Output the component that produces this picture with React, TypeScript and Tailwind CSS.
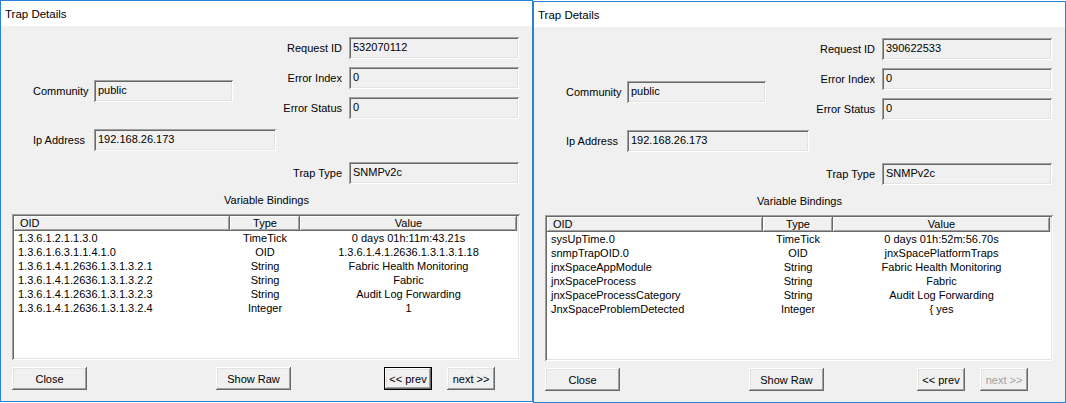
import React from "react";

const sunken =
  "shadow-[inset_1px_1px_0_#a0a0a0,inset_-1px_-1px_0_#ffffff,inset_2px_2px_0_#696969,inset_-2px_-2px_0_#e3e3e3]";
const raised =
  "shadow-[inset_-1px_-1px_0_#696969,inset_1px_1px_0_#ffffff,inset_-2px_-2px_0_#a0a0a0,inset_2px_2px_0_#e3e3e3]";

type Row = [string, string, string];

function Field({ value, w }: { value: string; w: string }) {
  return (
    <div className={`h-[22px] ${w} bg-[#f0f0f0] ${sunken} pl-[4px] pt-[3px] text-[11px] leading-[14px] text-black whitespace-nowrap overflow-hidden`}>
      {value}
    </div>
  );
}

function RightRow({ label, value }: { label: string; value: string }) {
  return (
    <div className="flex items-center">
      <div className="w-[61px] text-right text-[11px] leading-[14px] whitespace-nowrap">{label}</div>
      <div className="ml-[7px]">
        <Field value={value} w="w-[170px]" />
      </div>
    </div>
  );
}

function Btn({ label, w, variant }: { label: string; w: string; variant?: "default" | "disabled" }) {
  if (variant === "default") {
    return (
      <div className={`h-[23px] ${w} border border-black bg-[#f0f0f0] flex items-center justify-center text-[11px] leading-[14px]`}>
        <div className={`w-full h-full flex items-center justify-center ${raised}`}>{label}</div>
      </div>
    );
  }
  return (
    <div
      className={`h-[23px] ${w} bg-[#f0f0f0] ${raised} flex items-center justify-center text-[11px] leading-[14px] ${
        variant === "disabled" ? "text-[#a0a0a0]" : "text-black"
      }`}
    >
      {label}
    </div>
  );
}

function Dialog({
  requestId,
  rows,
  prevDefault,
  nextDisabled,
  shifted,
}: {
  requestId: string;
  rows: Row[];
  prevDefault?: boolean;
  nextDisabled?: boolean;
  shifted?: boolean;
}) {
  return (
    <div
      className={`w-[533px] h-[402px] border border-[#2a82d5] bg-[#f0f0f0] flex flex-col shrink-0 ${
        shifted ? "mt-px" : ""
      }`}
      style={{ fontFamily: '"Liberation Sans", Arial, sans-serif' }}
    >
      <div className="h-[25px] bg-white flex items-center pl-[4px] text-[11.5px] leading-[14px] text-black">
        Trap Details
      </div>
      <div className="flex-1 flex flex-col text-black">
        <div className="flex">
          <div className="w-[280px] pl-[32px] pt-[54px] flex flex-col gap-[27px]">
            <div className="flex items-center">
              <div className="w-[61px] text-[11px] leading-[14px]">Community</div>
              <Field value="public" w="w-[139px]" />
            </div>
            <div className="flex items-center">
              <div className="w-[61px] text-[11px] leading-[14px]">Ip Address</div>
              <Field value="192.168.26.173" w="w-[182px]" />
            </div>
          </div>
          <div className="pt-[11px] flex flex-col">
            <div className="flex flex-col gap-[8px]">
              <RightRow label="Request ID" value={requestId} />
              <RightRow label="Error Index" value="0" />
              <RightRow label="Error Status" value="0" />
            </div>
            <div className="mt-[43px]">
              <RightRow label="Trap Type" value="SNMPv2c" />
            </div>
          </div>
        </div>
        <div className="mt-[9px] text-center text-[11px] leading-[14px]">Variable Bindings</div>
        <div className={`mt-[7px] ml-[11px] w-[508px] h-[146px] bg-white ${sunken} p-[2px]`}>
          <div className="flex h-[15px] bg-[#f0f0f0] text-[11px] leading-[14px]">
            <div className="w-[216px] pl-[6px] shadow-[inset_-1px_-1px_0_#696969,inset_1px_1px_0_#ffffff,inset_-2px_-2px_0_#a0a0a0]">
              OID
            </div>
            <div className="w-[70px] text-center shadow-[inset_-1px_-1px_0_#696969,inset_1px_1px_0_#ffffff,inset_-2px_-2px_0_#a0a0a0]">
              Type
            </div>
            <div className="w-[217px] text-center shadow-[inset_-1px_-1px_0_#696969,inset_1px_1px_0_#ffffff,inset_-2px_-2px_0_#a0a0a0]">
              Value
            </div>
          </div>
          <div className="flex flex-col text-[11px] leading-[14px]">
            {rows.map((r, i) => (
              <div key={i} className="flex h-[14px] whitespace-nowrap">
                <div className="w-[216px] pl-[4px]">{r[0]}</div>
                <div className="w-[70px] text-center">{r[1]}</div>
                <div className="w-[217px] text-center">{r[2]}</div>
              </div>
            ))}
          </div>
        </div>
        <div className="mt-[7px] ml-[11px] flex">
          <Btn label="Close" w="w-[75px]" />
          <div className="ml-[129px]">
            <Btn label="Show Raw" w="w-[75px]" />
          </div>
          <div className="ml-[93px]">
            <Btn label="<< prev" w="w-[48px]" variant={prevDefault ? "default" : undefined} />
          </div>
          <div className="ml-[15px]">
            <Btn label="next >>" w="w-[48px]" variant={nextDisabled ? "disabled" : undefined} />
          </div>
        </div>
      </div>
    </div>
  );
}

const leftRows: Row[] = [
  ["1.3.6.1.2.1.1.3.0", "TimeTick", "0 days 01h:11m:43.21s"],
  ["1.3.6.1.6.3.1.1.4.1.0", "OID", "1.3.6.1.4.1.2636.1.3.1.3.1.18"],
  ["1.3.6.1.4.1.2636.1.3.1.3.2.1", "String", "Fabric Health Monitoring"],
  ["1.3.6.1.4.1.2636.1.3.1.3.2.2", "String", "Fabric"],
  ["1.3.6.1.4.1.2636.1.3.1.3.2.3", "String", "Audit Log Forwarding"],
  ["1.3.6.1.4.1.2636.1.3.1.3.2.4", "Integer", "1"],
];

const rightRows: Row[] = [
  ["sysUpTime.0", "TimeTick", "0 days 01h:52m:56.70s"],
  ["snmpTrapOID.0", "OID", "jnxSpacePlatformTraps"],
  ["jnxSpaceAppModule", "String", "Fabric Health Monitoring"],
  ["jnxSpaceProcess", "String", "Fabric"],
  ["jnxSpaceProcessCategory", "String", "Audit Log Forwarding"],
  ["JnxSpaceProblemDetected", "Integer", "{ yes"],
];

export default function App() {
  return (
    <div className="w-[1066px] h-[403px] bg-white flex overflow-hidden">
      <Dialog requestId="532070112" rows={leftRows} prevDefault />
      <Dialog requestId="390622533" rows={rightRows} nextDisabled shifted />
    </div>
  );
}
